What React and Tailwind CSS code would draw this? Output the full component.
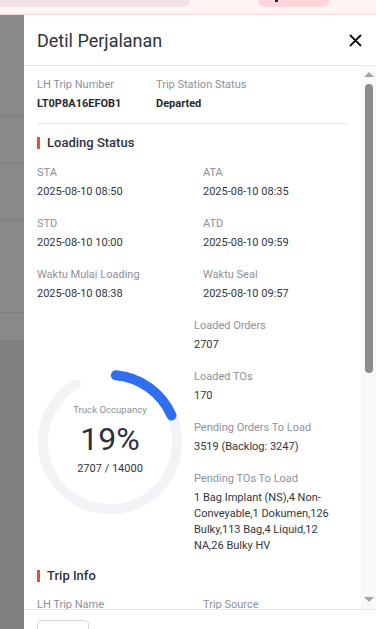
import React from 'react';

// Small label/value pair used across the drawer
const Field = ({ label, value, bold }) => (
  <div>
    <div className="text-[11px] leading-[18px] text-[#8c919b]">{label}</div>
    <div
      className={`mt-[2px] text-[11px] leading-[16px] ${
        bold ? 'font-bold text-[#262a30]' : 'text-[#33363b]'
      }`}
    >
      {value}
    </div>
  </div>
);

const SectionTitle = ({ children }) => (
  <div className="flex items-center gap-[7px]">
    <span className="w-[3px] h-[12px] bg-[#ee4d2d]" />
    <span className="text-[13px] leading-[20px] font-medium text-[#2f333a]">{children}</span>
  </div>
);

const Gauge = ({ percent, loaded, total }) => {
  const r = 67;
  const c = 2 * Math.PI * r;
  const track = c * 0.9;
  const fill = track * (percent / 100);
  return (
    <div className="relative w-[146px] h-[146px] flex flex-col items-center justify-center">
      <svg className="absolute inset-0" width="146" height="146" viewBox="0 0 146 146">
        {/* both arcs start a few degrees past 12 o'clock and run clockwise */}
        <g transform="rotate(-85 73 73)">
          <circle
            cx="73"
            cy="73"
            r={r}
            fill="none"
            stroke="#f2f3f7"
            strokeWidth="10"
            strokeLinecap="round"
            strokeDasharray={`${track} ${c}`}
          />
          <circle
            cx="73"
            cy="73"
            r={r}
            fill="none"
            stroke="#2f6fed"
            strokeWidth="10"
            strokeLinecap="round"
            strokeDasharray={`${fill} ${c}`}
          />
        </g>
      </svg>
      <div className="relative text-[9.6px] leading-[14px] text-[#8c919b] mt-[-4px]">Truck Occupancy</div>
      <div className="relative text-[32px] leading-[38px] text-[#2b303b] mt-[3px]">{percent}%</div>
      <div className="relative text-[11px] leading-[16px] text-[#33363b] mt-[3px]">
        {loaded} / {total}
      </div>
    </div>
  );
};

const App = () => {
  return (
    <div
      className="w-[376px] h-[629px] overflow-hidden flex flex-col bg-white"
      style={{ fontFamily: 'Roboto, "Liberation Sans", sans-serif' }}
    >
      {/* page header behind the drawer */}
      <div className="h-[15px] shrink-0 bg-[#fff4f4] border-b border-[#f5d6d9] relative overflow-hidden">
        <div className="absolute left-0 top-0 w-[190px] h-[7px] bg-[#f0e3e7] rounded-br-[8px]" />
        <div className="absolute left-[258px] top-0 w-[72px] h-[7px] bg-[#ffd5dc] rounded-b-[8px]" />
        <div className="absolute left-[275px] top-0 w-[3px] h-[2px] bg-[#222]" />
      </div>

      <div className="flex flex-1 min-h-0">
        {/* dimmed page */}
        <div className="w-[24px] shrink-0 flex flex-col bg-[#808080]">
          <div className="h-[325px] bg-[#898989] flex flex-col">
            <div className="h-[102px] border-b border-[#7e7e7e]" />
            <div className="h-[46px] border-b border-[#7e7e7e]" />
            <div className="h-[58px] border-b border-[#7e7e7e]" />
            <div className="h-[92px] border-b border-[#7e7e7e]" />
          </div>
        </div>

        {/* drawer */}
        <div className="flex-1 flex flex-col bg-white min-w-0">
          <div className="h-[51px] shrink-0 flex items-center justify-between pl-[13px] pr-[14px] border-b border-[#e6e7eb]">
            <h2 className="text-[18px] text-[#2f333a]">Detil Perjalanan</h2>
            <svg width="13" height="13" viewBox="0 0 13 13">
              <path d="M1 1L12 12M12 1L1 12" stroke="#111" strokeWidth="1.8" />
            </svg>
          </div>

          <div className="flex-1 min-h-0 flex">
            <div className="flex-1 min-w-0 overflow-hidden px-[13px] pt-[10px]">
              <div className="grid grid-cols-[119px_1fr] pb-[11px] border-b border-[#e8e9ec]">
                <Field label="LH Trip Number" value="LT0P8A16EFOB1" bold />
                <Field label="Trip Station Status" value="Departed" bold />
              </div>

              <div className="mt-[9px]">
                <SectionTitle>Loading Status</SectionTitle>
              </div>
              <div className="mt-[11px] grid grid-cols-[166px_1fr] gap-y-[15px]">
                <Field label="STA" value="2025-08-10 08:50" />
                <Field label="ATA" value="2025-08-10 08:35" />
                <Field label="STD" value="2025-08-10 10:00" />
                <Field label="ATD" value="2025-08-10 09:59" />
                <Field label="Waktu Mulai Loading" value="2025-08-10 08:38" />
                <Field label="Waktu Seal" value="2025-08-10 09:57" />
              </div>

              <div className="mt-[15px] flex">
                <div className="w-[157px] shrink-0 flex items-center pt-[13px]">
                  <Gauge percent={19} loaded={2707} total={14000} />
                </div>
                <div className="flex-1 flex flex-col gap-[15px]">
                  <Field label="Loaded Orders" value="2707" />
                  <Field label="Loaded TOs" value="170" />
                  <Field label="Pending Orders To Load" value="3519 (Backlog: 3247)" />
                  <Field
                    label="Pending TOs To Load"
                    value="1 Bag Implant (NS),4 Non-Conveyable,1 Dokumen,126 Bulky,113 Bag,4 Liquid,12 NA,26 Bulky HV"
                  />
                </div>
              </div>

              <div className="mt-[12px]">
                <SectionTitle>Trip Info</SectionTitle>
              </div>
              <div className="mt-[10px] grid grid-cols-[166px_1fr]">
                <Field label="LH Trip Name" value="-" />
                <Field label="Trip Source" value="-" />
              </div>
            </div>

            {/* scrollbar */}
            <div className="w-[15px] shrink-0 bg-[#f9f9f9] flex flex-col items-center pt-[6px] pb-[7px]">
              <div className="w-0 h-0 border-l-[5px] border-r-[5px] border-b-[5px] border-l-transparent border-r-transparent border-b-[#a3a3a3]" />
              <div className="mt-[7px] w-[8px] h-[289px] rounded-full bg-[#8c8c8c]" />
              <div className="flex-1" />
              <div className="w-0 h-0 border-l-[5px] border-r-[5px] border-t-[5px] border-l-transparent border-r-transparent border-t-[#a3a3a3]" />
            </div>
          </div>

          <div className="h-[20px] shrink-0 border-t border-[#e4e5e9] pl-[13px] pt-[10px]">
            <button className="w-[52px] h-[32px] border border-[#d9d9d9] rounded-[4px] text-[12px] text-[#333] bg-white">
              Lihat
            </button>
          </div>
        </div>
      </div>
    </div>
  );
};

export default App;
